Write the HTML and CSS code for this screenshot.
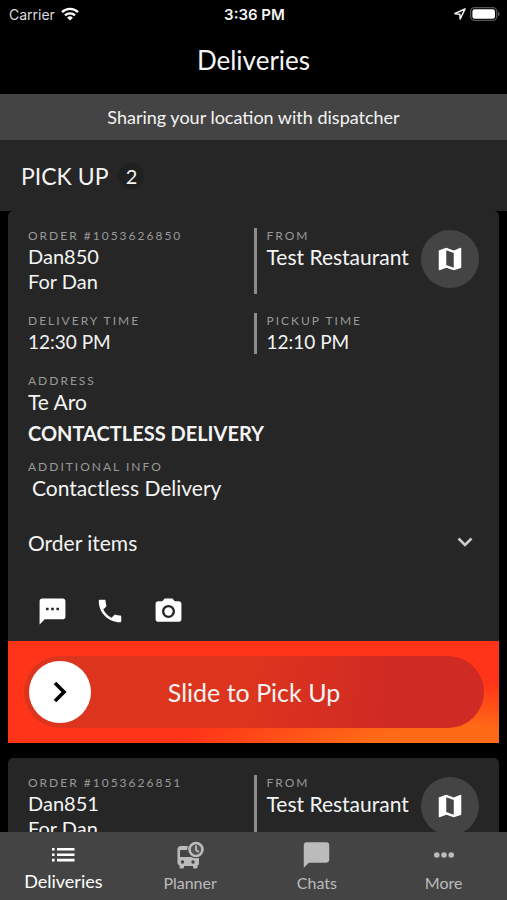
FILE: index.html
```html
<!DOCTYPE html>
<html lang="en">
<head>
    <meta charset="UTF-8">
    <meta name="viewport" content="width=device-width, initial-scale=1.0">
    <title>Deliveries</title>
    <link rel="stylesheet" href="styles.css">
</head>
<body>
    <!-- Shared icons -->
    <svg class="icon-defs" aria-hidden="true">
        <symbol id="icon-map" viewBox="0 0 24 24">
            <path d="M20.5 3l-.16.03L15 5.1 9 3 3.36 4.9c-.21.07-.36.25-.36.48V20.5c0 .28.22.5.5.5l.16-.03L9 18.9l6 2.1 5.64-1.9c.21-.07.36-.25.36-.48V3.5c0-.28-.22-.5-.5-.5zM15 19l-6-2.11V5l6 2.11V19z"/>
        </symbol>
    </svg>

    <div class="status-bar">
        <div class="carrier">
            <span>Carrier</span>
            <svg width="18" height="14" viewBox="0 0 18 14" fill="none" stroke="#fff" stroke-width="2.4">
                <path d="M1 5.2a11.4 11.4 0 0 1 16 0"/>
                <path d="M4 8.4a7.2 7.2 0 0 1 10 0"/>
                <path d="M9 13.6L6.1 10.7a4.2 4.2 0 0 1 5.8 0z" fill="#fff" stroke="none"/>
            </svg>
        </div>
        <div class="clock">3:36 PM</div>
        <div class="battery">
            <svg width="12" height="12" viewBox="0 0 12 12" fill="none" stroke="#eee" stroke-width="1.6" stroke-linejoin="round">
                <path d="M11 1L1 5.6l4.8.6.4 4.8z"/>
            </svg>
            <svg width="30" height="14" viewBox="0 0 30 14">
                <rect x=".7" y=".7" width="26" height="12.6" rx="3.8" fill="none" stroke="#555" stroke-width="1.3"/>
                <rect x="2.4" y="2.2" width="22.6" height="9.6" rx="2.2" fill="#fff"/>
                <path d="M28 4.6v4.8c1-.4 1.6-1.3 1.6-2.4S29 5 28 4.6z" fill="#555"/>
            </svg>
        </div>
    </div>

    <header class="title-bar">
        <h1>Deliveries</h1>
    </header>
    <div class="banner">Sharing your location with dispatcher</div>

    <main class="list">
        <div class="section-header">
            <h2>PICK UP</h2>
            <span class="count">2</span>
        </div>

        <article class="card">
            <div class="card-body">
                <div class="row">
                    <div class="col order">
                        <div class="label">ORDER #1053626850</div>
                        <div class="value">Dan850</div>
                        <div class="value">For Dan</div>
                    </div>
                    <div class="col divided">
                        <div class="from">
                            <div class="label">FROM</div>
                            <div class="value">Test Restaurant</div>
                        </div>
                        <button type="button" class="map-btn" aria-label="Show map">
                            <svg width="30" height="30"><use href="#icon-map"/></svg>
                        </button>
                    </div>
                </div>
                <div class="row">
                    <div class="col">
                        <div class="label">DELIVERY TIME</div>
                        <div class="value time">12:30 PM</div>
                    </div>
                    <div class="col divided">
                        <div class="from">
                            <div class="label">PICKUP TIME</div>
                            <div class="value time">12:10 PM</div>
                        </div>
                    </div>
                </div>
                <div class="address">
                    <div class="label">ADDRESS</div>
                    <div class="value">Te Aro</div>
                    <div class="value contactless">CONTACTLESS DELIVERY</div>
                </div>
                <div class="info">
                    <div class="label">ADDITIONAL INFO</div>
                    <div class="value note">Contactless Delivery</div>
                </div>
                <button type="button" class="order-items" aria-expanded="false">
                    <span>Order items</span>
                    <svg width="16" height="10" viewBox="0 0 16 10" fill="none" stroke="#ccc" stroke-width="2.6">
                        <path d="M1.5 1.5L8 8l6.5-6.5"/>
                    </svg>
                </button>
                <div class="actions">
                    <button type="button" aria-label="Message">
                        <svg width="31" height="31" viewBox="0 0 24 24" fill="#fff">
                            <path d="M20 2H4c-1.1 0-1.99.9-1.99 2L2 22l4-4h14c1.1 0 2-.9 2-2V4c0-1.100-.9-2-2-2zM9 11H7V9h2v2zm4 0h-2V9h2v2zm4 0h-2V9h2v2z"/>
                        </svg>
                    </button>
                    <button type="button" aria-label="Call">
                        <svg width="30" height="30" viewBox="0 0 24 24" fill="#fff">
                            <path d="M6.62 10.79c1.44 2.83 3.76 5.14 6.59 6.59l2.2-2.2c.27-.27.67-.36 1.02-.24 1.12.37 2.33.57 3.57.57.55 0 1 .45 1 1V20c0 .55-.45 1-1 1-9.39 0-17-7.61-17-17 0-.55.45-1 1-1h3.5c.55 0 1 .45 1 1 0 1.25.2 2.45.57 3.57.11.35.03.74-.25 1.02l-2.2 2.2z"/>
                        </svg>
                    </button>
                    <button type="button" aria-label="Take photo">
                        <svg width="31" height="31" viewBox="0 0 24 24" fill="#fff">
                            <path d="M9 2L7.17 4H4c-1.1 0-2 .9-2 2v12c0 1.1.9 2 2 2h16c1.1 0 2-.9 2-2V6c0-1.1-.9-2-2-2h-3.17L15 2H9zm3 15c-2.76 0-5-2.24-5-5s2.24-5 5-5 5 2.24 5 5-2.24 5-5 5z"/>
                            <circle cx="12" cy="12" r="3.2"/>
                        </svg>
                    </button>
                </div>
            </div>
            <div class="slide">
                <input type="range" id="slide" min="0" max="100" value="0">
                <label for="slide">Slide to Pick Up</label>
            </div>
        </article>

        <article class="card">
            <div class="card-body">
                <div class="row">
                    <div class="col order">
                        <div class="label">ORDER #1053626851</div>
                        <div class="value">Dan851</div>
                        <div class="value">For Dan</div>
                    </div>
                    <div class="col divided">
                        <div class="from">
                            <div class="label">FROM</div>
                            <div class="value">Test Restaurant</div>
                        </div>
                        <button type="button" class="map-btn" aria-label="Show map">
                            <svg width="30" height="30"><use href="#icon-map"/></svg>
                        </button>
                    </div>
                </div>
            </div>
        </article>
    </main>

    <nav class="tabs">
        <a href="#deliveries" class="tab active">
            <svg width="24" height="28" viewBox="0 0 24 28" fill="currentColor">
                <path d="M1 7h2.600v2.600H1zM1 12.400h2.600V15H1zM1 17.800h2.600v2.600H1zM6 7h17.500v2.600H6zM6 12.400h17.500V15H6zM6 17.800h17.500v2.600H6z"/>
            </svg>
            <span>Deliveries</span>
        </a>
        <a href="#planner" class="tab">
            <svg width="28" height="28" viewBox="0 0 28 28">
                <path d="M5 5h14a4 4 0 0 1 4 4v13.5a2 2 0 0 1-1.500 2V26a1.500 1.500 0 0 1-1.500 1.500h-1.500A1.500 1.500 0 0 1 17 26v-1H8v1a1.500 1.500 0 0 1-1.500 1.500H5A1.500 1.500 0 0 1 3.500 26v-1.500a3 3 0 0 1-2-2.500V8.500A3.500 3.500 0 0 1 5 5z" fill="currentColor"/>
                <path d="M4 9h16v7H4z" fill="#444"/>
                <circle cx="6.5" cy="21" r="1.7" fill="#444"/>
                <circle cx="17" cy="21" r="1.7" fill="#444"/>
                <circle cx="20" cy="8.500" r="8.800" fill="#444"/>
                <circle cx="20" cy="8.500" r="6.500" fill="#555" stroke="currentColor" stroke-width="2.600"/>
                <path d="M20 4.500V9l2.800 2" fill="none" stroke="currentColor" stroke-width="1.8"/>
            </svg>
            <span>Planner</span>
        </a>
        <a href="#chats" class="tab">
            <svg width="31" height="28" viewBox="0 0 24 22" fill="currentColor">
                <path d="M20 1H4c-1.1 0-2 .9-2 2v18l4-4h14c1.1 0 2-.9 2-2V3c0-1.1-.9-2-2-2z"/>
            </svg>
            <span>Chats</span>
        </a>
        <a href="#more" class="tab">
            <svg width="22" height="28" viewBox="0 0 22 28" fill="currentColor">
                <circle cx="3.8" cy="14" r="2.8"/>
                <circle cx="11" cy="14" r="2.8"/>
                <circle cx="18.2" cy="14" r="2.8"/>
            </svg>
            <span>More</span>
        </a>
    </nav>
</body>
</html>
```
FILE: styles.css
```css
* {
    box-sizing: border-box;
}
body {
    margin: 0;
    height: 100vh;
    display: flex;
    flex-direction: column;
    overflow: hidden;
    background: #000;
    color: #f4f4f4;
    font-family: Lato, "Open Sans", sans-serif;
    font-size: 21px;
}
button {
    padding: 0;
    border: none;
    background: none;
    color: inherit;
    font: inherit;
    cursor: pointer;
}
svg {
    display: block;
}
.icon-defs {
    display: none;
}

/* Top of the screen */
.status-bar {
    display: grid;
    grid-template-columns: 1fr auto 1fr;
    align-items: center;
    height: 28px;
    padding: 0 7px 0 9px;
    font-family: Inter, sans-serif;
    font-size: 14px;
}
.carrier,
.battery {
    display: flex;
    align-items: center;
    gap: 6px;
}
.carrier {
    color: #ddd;
}
.battery {
    justify-content: flex-end;
    gap: 4px;
}
.clock {
    font-size: 15px;
    font-weight: 600;
}
.title-bar {
    height: 66px;
    padding-bottom: 2px;
    display: flex;
    align-items: center;
    justify-content: center;
}
h1,
h2 {
    margin: 0;
    font-size: 26px;
    font-weight: 400;
}
h2 {
    font-size: 23px;
}
.banner {
    padding: 11px 16px;
    background: #444;
    font-size: 18px;
    line-height: 24px;
    text-align: center;
}

/* Delivery list */
.list {
    flex: 1;
    min-height: 0;
    overflow: hidden;
}
.section-header {
    display: flex;
    align-items: center;
    gap: 10px;
    height: 71px;
    padding: 0 21px;
    background: #262626;
}
.count {
    width: 26px;
    border-radius: 13px;
    background: #202020;
    font-size: 20px;
    line-height: 26px;
    text-align: center;
}
.card {
    margin: 0 8px 15px;
    border-radius: 5px 5px 0 0;
    overflow: hidden;
    background: #262626;
}
.card-body {
    padding: 17px 20px 6px;
}
.row {
    display: grid;
    grid-template-columns: 1fr 1fr;
    margin-bottom: 19px;
}
.divided {
    display: flex;
    border-left: 3px solid #8c8c8c;
    padding-left: 10px;
}
.from {
    flex: 1;
    white-space: nowrap;
}
.label {
    color: #999;
    font-size: 12px;
    line-height: 16px;
    letter-spacing: 2px;
}
.value {
    line-height: 25px;
}
.order .value,
.contactless {
    font-size: 20px;
}
.time {
    font-size: 19px;
}
.contactless {
    margin-top: 7px;
    font-weight: 700;
}
.info {
    margin-top: 13px;
}
.note {
    padding-left: 4px;
}
.map-btn {
    display: flex;
    align-items: center;
    justify-content: center;
    width: 58px;
    height: 58px;
    margin-top: 2px;
    border-radius: 50%;
    background: #444;
    fill: #fff;
}
.order-items {
    display: flex;
    align-items: center;
    justify-content: space-between;
    width: 100%;
    height: 44px;
    margin-top: 20px;
    padding-right: 6px;
}
.actions {
    display: flex;
    gap: 10px;
    margin-top: 23px;
}
.actions button {
    display: flex;
    align-items: center;
    justify-content: center;
    width: 48px;
    height: 48px;
}

/* Slide to confirm */
.slide {
    display: grid;
    align-items: center;
    padding: 15px 15px 15px 16px;
    background: radial-gradient(ellipse 55% 68% at 90% 108%, #ff6a16 35%, #ff3418 100%);
}
.slide input,
.slide label {
    grid-area: 1 / 1;
}
.slide label {
    font-size: 25px;
    text-align: center;
    pointer-events: none;
}
.slide input {
    appearance: none;
    width: 100%;
    height: 72px;
    margin: 0;
    padding: 0 5px;
    border-radius: 36px;
    background: linear-gradient(100deg, #dd341e 50%, #cf2a24 80%);
}
.slide input::-webkit-slider-thumb {
    appearance: none;
    width: 62px;
    height: 62px;
    border-radius: 50%;
    background: #fff url("data:image/svg+xml,%3Csvg xmlns='http://www.w3.org/2000/svg' width='14' height='22' viewBox='0 0 14 22'%3E%3Cpath d='M2 2l9 9-9 9' fill='none' stroke='%23000' stroke-width='3.6'/%3E%3C/svg%3E") center no-repeat;
}

/* Bottom tabs */
.tabs {
    display: grid;
    grid-template-columns: repeat(4, 1fr);
    height: 68px;
    background: #444;
}
.tab {
    display: flex;
    flex-direction: column;
    align-items: center;
    gap: 2px;
    padding-top: 9px;
    color: #bbb;
    font-size: 16px;
    line-height: 24px;
    text-decoration: none;
}
.tab.active {
    gap: 0;
    color: #fff;
    font-size: 18px;
}
```
